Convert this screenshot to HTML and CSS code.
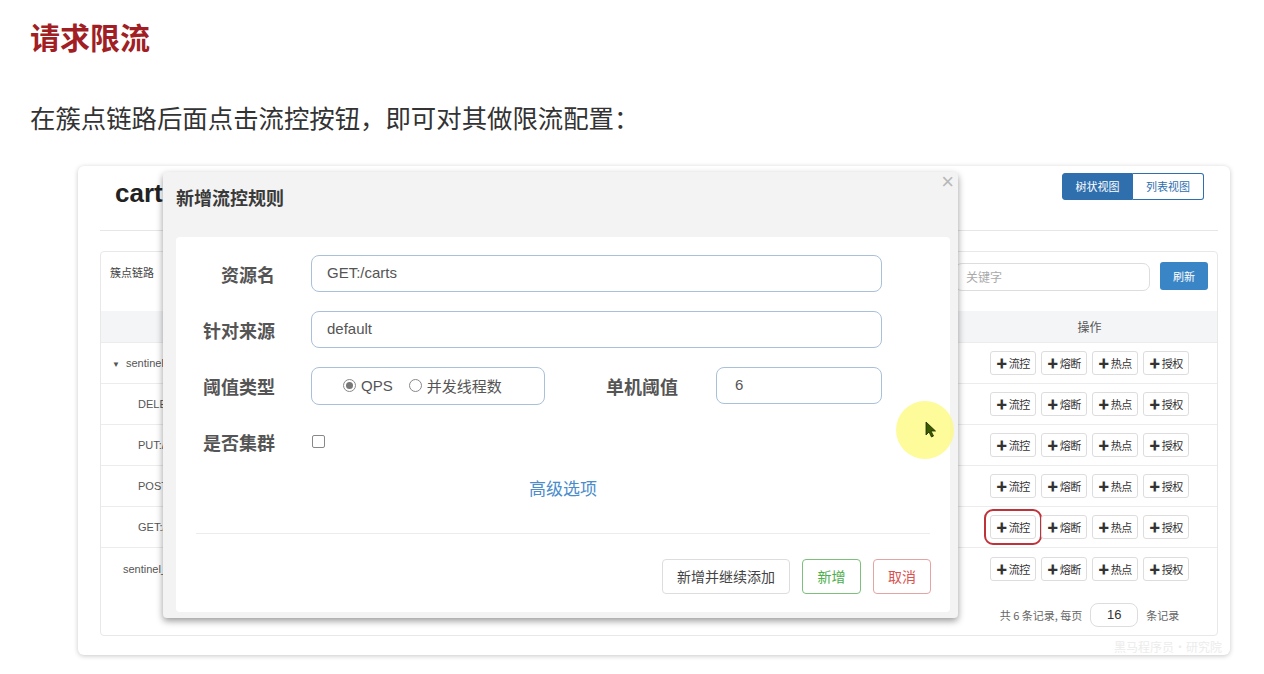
FILE: index.html
```html
<!DOCTYPE html>
<html lang="zh-CN">
<head>
<meta charset="utf-8">
<title>请求限流</title>
<link rel="stylesheet" href="styles.css">
</head>
<body>
<div class="doc">
  <h1 class="doc-title">请求限流</h1>
  <p class="doc-text">在簇点链路后面点击流控按钮，即可对其做限流配置：</p>

  <div class="frame">
    <div class="frame-head">
      <div class="app-title">cart</div>
      <div class="view-switch">
        <span class="view-btn active">树状视图</span>
        <span class="view-btn">列表视图</span>
      </div>
    </div>

    <div class="panel">
      <div class="panel-bar">
        <span class="panel-label">簇点链路</span>
        <div class="bar-right">
          <span class="search">关键字</span>
          <span class="refresh">刷新</span>
        </div>
      </div>
      <div class="trow thead">
        <div class="cell-name">资源名</div>
        <div class="cell-ops">操作</div>
      </div>
      <div class="trow">
        <div class="cell-name lvl0"><span class="caret">▼</span> sentinel_spring_web_context</div>
        <div class="cell-ops"><span class="op">✚ 流控</span><span class="op">✚ 熔断</span><span class="op">✚ 热点</span><span class="op">✚ 授权</span></div>
      </div>
      <div class="trow">
        <div class="cell-name lvl1">DELETE:/carts/{id}</div>
        <div class="cell-ops"><span class="op">✚ 流控</span><span class="op">✚ 熔断</span><span class="op">✚ 热点</span><span class="op">✚ 授权</span></div>
      </div>
      <div class="trow">
        <div class="cell-name lvl1">PUT:/carts</div>
        <div class="cell-ops"><span class="op">✚ 流控</span><span class="op">✚ 熔断</span><span class="op">✚ 热点</span><span class="op">✚ 授权</span></div>
      </div>
      <div class="trow">
        <div class="cell-name lvl1">POST:/carts</div>
        <div class="cell-ops"><span class="op">✚ 流控</span><span class="op">✚ 熔断</span><span class="op">✚ 热点</span><span class="op">✚ 授权</span></div>
      </div>
      <div class="trow">
        <div class="cell-name lvl1">GET:/carts</div>
        <div class="cell-ops"><span class="op marked">✚ 流控</span><span class="op">✚ 熔断</span><span class="op">✚ 热点</span><span class="op">✚ 授权</span></div>
      </div>
      <div class="trow last">
        <div class="cell-name lvl2">sentinel_default_context</div>
        <div class="cell-ops"><span class="op">✚ 流控</span><span class="op">✚ 熔断</span><span class="op">✚ 热点</span><span class="op">✚ 授权</span></div>
      </div>
      <div class="trow pager">
        <div class="cell-name"></div>
        <div class="cell-ops">共 6 条记录, 每页 <span class="page-size">16</span> 条记录</div>
      </div>
    </div>

    <div class="watermark">黑马程序员·研究院</div>

    <div class="modal">
      <div class="modal-head">
        <span class="modal-title">新增流控规则</span>
        <span class="modal-close">×</span>
      </div>
      <div class="modal-body">
        <div class="form">
          <div class="f-label">资源名</div>
          <div class="f-input">GET:/carts</div>

          <div class="f-label">针对来源</div>
          <div class="f-input">default</div>

          <div class="f-label">阈值类型</div>
          <div class="f-line">
            <div class="radio-box">
              <span class="radio on"></span><span class="r-text">QPS</span>
              <span class="radio"></span><span class="r-text">并发线程数</span>
            </div>
            <div class="f-label inline">单机阈值</div>
            <div class="f-input small">6</div>
          </div>

          <div class="f-label">是否集群</div>
          <div class="f-line"><span class="checkbox"></span></div>
        </div>
        <div class="adv">高级选项</div>
        <div class="divider"></div>
        <div class="modal-foot">
          <span class="btn">新增并继续添加</span>
          <span class="btn ok">新增</span>
          <span class="btn cancel">取消</span>
        </div>
      </div>
    </div>

    <div class="pointer">
      <svg width="12" height="17" viewBox="0 0 12 17"><path d="M1 1 L1 14 L4 11 L6.5 16 L8.5 15 L6 10 L10.5 10 Z" fill="#3a5a00" stroke="#1c2a00" stroke-width="0.8"/></svg>
    </div>
  </div>
</div>
</body>
</html>
```

FILE: styles.css
```css
* { box-sizing: border-box; }
html, body { margin: 0; padding: 0; background: #fff; }
body {
  font-family: "Liberation Sans", "Noto Sans CJK SC", sans-serif;
  color: #333;
  width: 1264px;
  height: 674px;
  overflow: hidden;
}
.doc { padding: 19px 0 0 30px; }
.doc-title {
  margin: 0;
  font-family: "Noto Sans CJK SC", sans-serif;
  font-size: 30px;
  line-height: 35px;
  font-weight: 700;
  color: #a11f24;
}
.doc-text {
  margin: 46px 0 0 0;
  font-family: "Noto Sans CJK SC", sans-serif;
  font-size: 25.4px;
  line-height: 34px;
  color: #333;
}
.frame {
  position: relative;
  margin: 32px 0 0 48px;
  width: 1152px;
  height: 489px;
  padding: 7px 12px 0 22px;
  background: #fff;
  border-radius: 6px;
  box-shadow: 0 1px 5px rgba(0,0,0,0.22);
}
.frame-head {
  display: flex;
  justify-content: space-between;
  align-items: flex-start;
  height: 58px;
  border-bottom: 1px solid #e6e6e6;
}
.app-title {
  margin: 5px 0 0 15px;
  font-size: 26px;
  line-height: 30px;
  font-weight: 700;
  color: #222;
}
.view-switch { display: flex; margin-right: 14px; }
.view-btn {
  width: 71px;
  height: 27px;
  line-height: 25px;
  text-align: center;
  font-family: "Noto Sans CJK SC", sans-serif;
  font-size: 11px;
  color: #2f6fae;
  border: 1px solid #2f6fae;
  background: #fff;
}
.view-btn:first-child { border-radius: 3px 0 0 3px; }
.view-btn:last-child { border-radius: 0 3px 3px 0; border-left: none; }
.view-btn.active { background: #2f6fae; color: #fff; }

.panel {
  margin-top: 20px;
  height: 385px;
  border: 1px solid #e8e8e8;
  border-radius: 4px;
}
.panel-bar {
  display: flex;
  justify-content: space-between;
  align-items: flex-start;
  height: 59px;
  padding: 10px 9px 0 9px;
}
.panel-label {
  font-family: "Noto Sans CJK SC", sans-serif;
  font-size: 11px;
  line-height: 20px;
  color: #444;
}
.bar-right { display: flex; gap: 10px; }
.search {
  width: 195px;
  height: 28px;
  margin-top: 1px;
  padding-left: 10px;
  line-height: 26px;
  font-family: "Noto Sans CJK SC", sans-serif;
  font-size: 12px;
  color: #aaa;
  border: 1px solid #ddd;
  border-radius: 7px;
}
.refresh {
  width: 48px;
  height: 28px;
  line-height: 28px;
  text-align: center;
  font-family: "Noto Sans CJK SC", sans-serif;
  font-size: 11px;
  color: #fff;
  background: #3a85c6;
  border-radius: 3px;
}
.trow {
  display: flex;
  align-items: center;
  height: 41px;
  border-bottom: 1px solid #ececec;
}
.trow.thead {
  height: 32px;
  background: #f4f5f7;
  font-family: "Noto Sans CJK SC", sans-serif;
  font-size: 12px;
  color: #555;
}
.trow.last { border-bottom: none; }
.trow.pager {
  height: 47px;
  border-bottom: none;
  padding-top: 5px;
  font-family: "Noto Sans CJK SC", sans-serif;
  font-size: 11px;
  color: #666;
}
.cell-name {
  flex: 1;
  font-size: 11px;
  color: #555;
  white-space: nowrap;
  overflow: hidden;
}
.thead .cell-name { text-align: center; }
.lvl0 { padding-left: 11px; }
.lvl1 { padding-left: 37px; }
.lvl2 { padding-left: 22px; }
.caret { font-size: 8px; margin-right: 3px; }
.cell-ops {
  width: 264px;
  padding-left: 9px;
  display: flex;
  justify-content: center;
  align-items: center;
  gap: 5px;
}
.op {
  width: 46px;
  height: 24px;
  line-height: 22px;
  text-align: center;
  font-family: "Noto Sans CJK SC", sans-serif;
  font-size: 11px;
  color: #333;
  border: 1px solid #ddd;
  border-radius: 3px;
  background: #fff;
  white-space: nowrap;
  letter-spacing: -0.5px;
}
.op.marked {
  outline: 2px solid #c0323a;
  outline-offset: 4px;
  border-radius: 3px;
}
.page-size {
  display: inline-block;
  width: 48px;
  height: 24px;
  line-height: 22px;
  margin: 0 3px;
  text-align: center;
  font-family: "Liberation Sans", sans-serif;
  font-size: 13px;
  color: #333;
  border: 1px solid #ddd;
  border-radius: 8px;
}
.watermark {
  position: absolute;
  right: 8px;
  bottom: 0;
  font-family: "Noto Sans CJK SC", sans-serif;
  font-size: 12px;
  color: #ececec;
}

.modal {
  position: absolute;
  left: 85px;
  top: 6px;
  width: 795px;
  height: 446px;
  background: #f3f3f3;
  border-radius: 4px;
  box-shadow: 0 3px 7px rgba(0,0,0,0.4);
  display: flex;
  flex-direction: column;
}
.modal-head {
  position: relative;
  height: 65px;
  padding: 10px 0 0 13px;
}
.modal-title {
  font-family: "Noto Sans CJK SC", sans-serif;
  font-size: 18px;
  line-height: 30px;
  font-weight: 700;
  color: #3a3a3a;
}
.modal-close {
  position: absolute;
  right: 4px;
  top: -2px;
  font-size: 22px;
  line-height: 24px;
  color: #b8b8b8;
}
.modal-body {
  margin: 0 8px 0 13px;
  height: 375px;
  background: #fff;
  border-radius: 4px;
  padding-top: 18px;
}
.form {
  display: grid;
  grid-template-columns: 99px 571px;
  column-gap: 36px;
  row-gap: 19px;
  grid-auto-rows: 37px;
  align-items: center;
}
.f-label {
  text-align: right;
  font-family: "Noto Sans CJK SC", sans-serif;
  font-size: 18px;
  font-weight: 700;
  color: #555;
  white-space: nowrap;
}
.f-label.inline { margin-left: 61px; text-align: left; }
.f-input {
  height: 37px;
  padding-left: 15px;
  line-height: 34px;
  font-family: "Liberation Sans", "Noto Sans CJK SC", sans-serif;
  font-size: 15px;
  color: #555;
  border: 1.5px solid #a9c0da;
  border-radius: 8px;
}
.f-input.small { width: 166px; margin-left: 38px; padding-left: 18px; }
.f-line { display: flex; align-items: center; height: 37px; }
.radio-box {
  display: flex;
  align-items: center;
  width: 234px;
  height: 38px;
  padding-left: 31px;
  border: 1.5px solid #a9c0da;
  border-radius: 8px;
  font-family: "Liberation Sans", "Noto Sans CJK SC", sans-serif;
  font-size: 15px;
  color: #555;
}
.radio {
  width: 13px;
  height: 13px;
  border: 1px solid #888;
  border-radius: 50%;
  display: inline-block;
  position: relative;
  background: #fff;
}
.radio.on::after {
  content: "";
  position: absolute;
  left: 2px;
  top: 2px;
  width: 7px;
  height: 7px;
  border-radius: 50%;
  background: #777;
}
.r-text { margin: 0 16px 0 5px; }
.checkbox {
  width: 13px;
  height: 13px;
  margin-left: 1px;
  border: 1.5px solid #888;
  border-radius: 2px;
  display: inline-block;
}
.adv {
  margin-top: 16px;
  text-align: center;
  font-family: "Noto Sans CJK SC", sans-serif;
  font-size: 17px;
  line-height: 24px;
  color: #4a8ccc;
}
.divider {
  margin: 33px 20px 0 20px;
  height: 1px;
  background: #ececec;
}
.modal-foot {
  display: flex;
  justify-content: flex-end;
  gap: 12px;
  margin-top: 25px;
  padding-right: 19px;
}
.btn {
  height: 35px;
  line-height: 33px;
  padding: 0 14px;
  font-family: "Noto Sans CJK SC", sans-serif;
  font-size: 14px;
  color: #444;
  border: 1px solid #ddd;
  border-radius: 4px;
  background: #fff;
}
.btn.ok { width: 59px; padding: 0; text-align: center; color: #4cae4c; border: 1.5px solid #7cc07c; }
.btn.cancel { width: 58px; padding: 0; text-align: center; color: #d9534f; border: 1.5px solid #e6a3a3; }

.pointer {
  position: absolute;
  left: 818px;
  top: 235px;
  width: 58px;
  height: 58px;
  border-radius: 50%;
  background: rgba(252, 250, 120, 0.75);
  display: flex;
  align-items: center;
  justify-content: center;
}
.pointer svg { margin: 0 0 2px 12px; }
```
